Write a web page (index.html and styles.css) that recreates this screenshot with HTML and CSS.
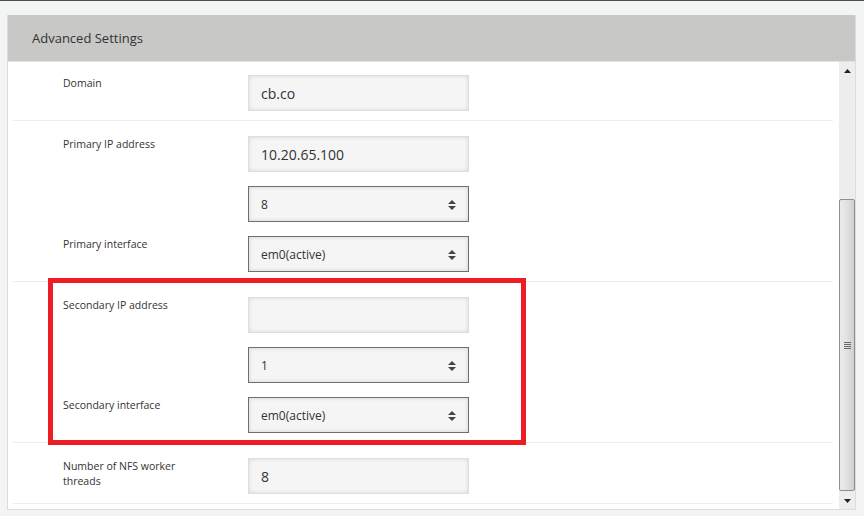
FILE: index.html
```html
<!DOCTYPE html>
<html>
<head>
<meta charset="utf-8">
<link rel="stylesheet" href="styles.css">
</head>
<body>
<div class="topbar"></div>
<div class="panel">
  <div class="panel-head">Advanced Settings</div>
  <div class="panel-body">
    <div class="content">
      <div class="row first">
        <div class="field">
          <div class="label">Domain</div>
          <div class="input">cb.co</div>
        </div>
      </div>
      <div class="row">
        <div class="field">
          <div class="label">Primary IP address</div>
          <div class="input">10.20.65.100</div>
        </div>
        <div class="field">
          <div class="label"></div>
          <div class="select"><span>8</span><svg class="caret" width="8" height="10" viewBox="0 0 8 10"><polygon points="0,4 4,0 8,4"/><polygon points="0,6 8,6 4,10"/></svg></div>
        </div>
        <div class="field">
          <div class="label">Primary interface</div>
          <div class="select"><span>em0(active)</span><svg class="caret" width="8" height="10" viewBox="0 0 8 10"><polygon points="0,4 4,0 8,4"/><polygon points="0,6 8,6 4,10"/></svg></div>
        </div>
      </div>
      <div class="row">
        <div class="field">
          <div class="label">Secondary IP address</div>
          <div class="input"></div>
        </div>
        <div class="field">
          <div class="label"></div>
          <div class="select"><span>1</span><svg class="caret" width="8" height="10" viewBox="0 0 8 10"><polygon points="0,4 4,0 8,4"/><polygon points="0,6 8,6 4,10"/></svg></div>
        </div>
        <div class="field">
          <div class="label">Secondary interface</div>
          <div class="select"><span>em0(active)</span><svg class="caret" width="8" height="10" viewBox="0 0 8 10"><polygon points="0,4 4,0 8,4"/><polygon points="0,6 8,6 4,10"/></svg></div>
        </div>
      </div>
      <div class="row">
        <div class="field">
          <div class="label">Number of NFS worker threads</div>
          <div class="input">8</div>
        </div>
      </div>
    </div>
    <div class="scrollbar">
      <div class="sb-btn"><svg width="7" height="4" viewBox="0 0 7 4"><polygon points="0,4 3.5,0 7,4"/></svg></div>
      <div class="sb-track">
        <div class="sb-thumb">
          <div class="grip"><i></i><i></i><i></i><i></i></div>
        </div>
      </div>
      <div class="sb-btn down"><svg width="7" height="4" viewBox="0 0 7 4"><polygon points="0,0 7,0 3.5,4"/></svg></div>
    </div>
  </div>
  <div class="highlight"></div>
</div>
</body>
</html>
```

FILE: styles.css
```css
html, body {
  margin: 0;
  padding: 0;
}
body {
  background: #f3f5f4;
  font-family: "Open Sans", "Noto Sans", sans-serif;
  color: #333;
  width: 864px;
  height: 516px;
  overflow: hidden;
}
.topbar {
  height: 1px;
  background: #4d4d4d;
}
.panel {
  position: relative;
  margin: 14px 0 0 7px;
  width: 849px;
  box-sizing: border-box;
  border: 1px solid #dcdcdc;
  border-top: none;
  background: #fff;
}
.panel-head {
  height: 46px;
  background: #c8c8c6;
  border-bottom: 1px solid #e3e3e3;
  padding-left: 24px;
  font-size: 13px;
  line-height: 46px;
  color: #333;
}
.panel-body {
  display: flex;
  height: 447px;
  overflow: hidden;
}
.content {
  flex: 1;
  padding: 0 6px 0 5px;
}
.row {
  border-bottom: 1px solid #ececec;
  padding: 15px 0 9px 50px;
  display: flex;
  flex-direction: column;
  gap: 14px;
}
.row.first {
  padding-top: 13px;
}
.field {
  display: flex;
  align-items: flex-start;
}
.label {
  width: 130px;
  margin-right: 55px;
  padding-top: 1px;
  font-size: 10.5px;
  line-height: 15px;
  color: #333;
}
.input, .select {
  width: 221px;
  height: 36px;
  box-sizing: border-box;
  background: #f5f5f5;
  padding-left: 12px;
  color: #333;
}
.input {
  border: 1px solid #dedede;
  box-shadow: inset 0 0 4px rgba(0, 0, 0, 0.12);
  font-size: 14px;
  line-height: 34px;
  padding-top: 1px;
}
.select {
  border: 1px solid #6f6f6f;
  box-shadow: inset 0 0 4px rgba(0, 0, 0, 0.14);
  font-size: 12px;
  line-height: 34px;
  display: flex;
  align-items: center;
  justify-content: space-between;
  padding-right: 12px;
  padding-top: 1px;
}
.caret {
  fill: #444;
  display: block;
}
.scrollbar {
  width: 16px;
  display: flex;
  flex-direction: column;
  background: #ededed;
}
.sb-btn {
  height: 17px;
  display: flex;
  align-items: center;
  justify-content: center;
}
.sb-btn svg {
  fill: #222;
  display: block;
}
.sb-track {
  flex: 1;
  display: flex;
  flex-direction: column;
  justify-content: flex-end;
  padding-bottom: 2px;
}
.sb-thumb {
  height: 292px;
  box-sizing: border-box;
  border: 1px solid #8e8e8e;
  border-radius: 2px;
  background: linear-gradient(to right, #eaeaea 0%, #e4e4e4 40%, #cfcfcf 100%);
  display: flex;
  align-items: center;
  justify-content: center;
}
.grip {
  display: flex;
  flex-direction: column;
  gap: 1px;
}
.grip i {
  display: block;
  width: 7px;
  height: 1px;
  background: #6a6a6a;
}
.sb-btn.down {
  height: 16px;
}
.highlight {
  position: absolute;
  left: 40px;
  top: 263px;
  width: 478px;
  height: 167px;
  box-sizing: border-box;
  border: 5px solid #ee1c25;
  pointer-events: none;
}
```
